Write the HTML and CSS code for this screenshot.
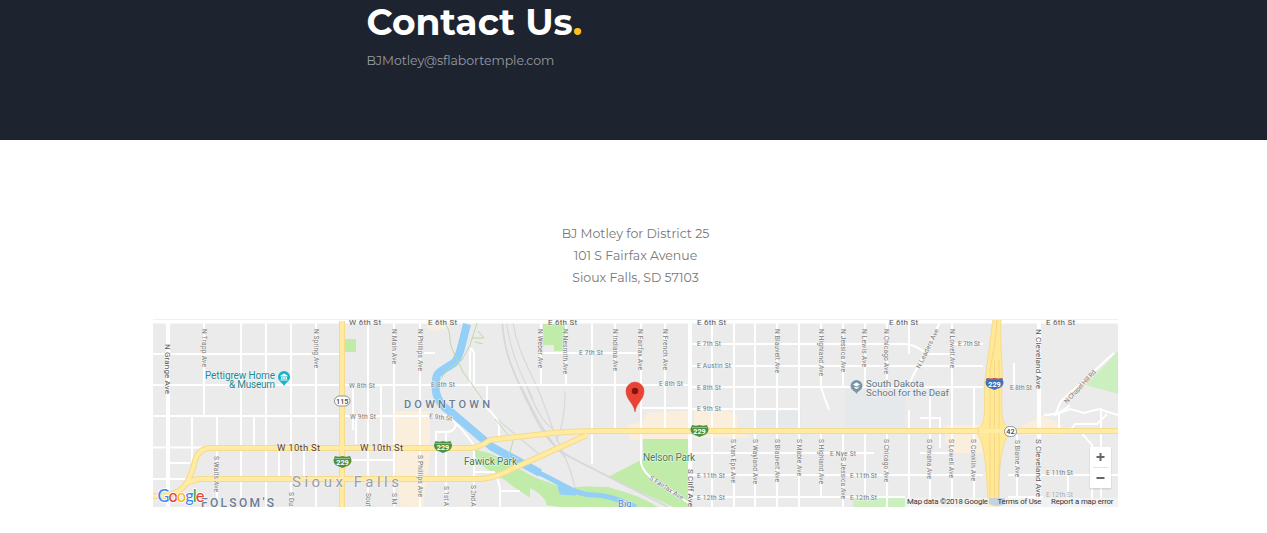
FILE: index.html
```html
<!DOCTYPE html>
<html lang="en">
<head>
<meta charset="utf-8">
<title>Contact Us</title>
<link rel="stylesheet" href="styles.css">
</head>
<body>
<header class="hero">
  <div class="hero-inner">
    <h1 class="title">Contact Us<span class="dot">.</span></h1>
    <p class="email">BJMotley@sflabortemple.com</p>
  </div>
</header>
<main class="content">
  <address class="address">
    <span>BJ Motley for District 25</span>
    <span>101 S Fairfax Avenue</span>
    <span>Sioux Falls, SD 57103</span>
  </address>
  <svg class="map" viewBox="153 319 965 188" role="img" aria-label="Map of Sioux Falls">
    <rect x="153" y="319" width="965" height="188" fill="#ebebeb"/>
    <!-- parks and built-up areas -->
    <g fill="#faefdc">
      <path d="M395 411h35v40h-35zM396 450h35l-8 57h-22l-6-40zM427 324h22v4l-14 3-8-3zM628 425l14-3 5-9 33-2h10v29h-60zM694 408h28l15 7v15l15 8h-58zM945 425h38v28h-28l-10-12zM1022 427l20-12 20 10v10h-40z"/>
    </g>
    <path d="M845 389h60v40h-60zM756 411h45v18h-45z" fill="#e6e9ec"/>
    <g fill="#c0eba9">
      <path d="M344 339h12v13h-12zM543 324h22v27h-11v-6h-11zM643 439h45v68h-15l-65-30 35-18z"/>
      <path d="M474 449c8 3 14 3 20 6l42 23 34 12c6-5 20-3 38-3 20 6 34 10 50 20h-98c-18-1-28-8-37-14-10-6-18-14-28-19-8-5-20-10-21-25z"/>
      <path d="M1118 351v43l-32-9zM853 498h52v9h-52z" fill="#ccefc0"/>
    </g>
    <path d="M530 488q11 5 16 14v5h-16z" fill="#ebebeb"/>
    <!-- railway -->
    <g fill="none" stroke="#d6d7d9" stroke-width="1.100">
      <path d="M502 319c2 32 8 46 24 80 13 27 22 46 44 58l98 50" stroke-width="1.800"/>
      <path d="M512 319c6 35 19 52 28 75l13 35c7 20 16 30 24 67M506 319c4 30 10 45 27 80M520 384c12 25 24 50 46 75M526 384c8 22 17 39 27 45M565 391c0 22-3 38-9 50M498 420l42 35"/>
    </g>
    <!-- local streets -->
    <g fill="none" stroke="#fff" stroke-width="2">
      <path d="M153 321.500h965" stroke-width="4"/>
      <path d="M153 354h189M153 385h537M153 416h292M153 447.500h50M170 463h20M153 479h40"/>
      <path d="M204 319v98M192 416v63M217 417v90M241 319v188M254 417v30M266 319v188M279 450v28M291 319v188M304 450v28M316 319v188M368 319v188M394 319v188M381 385v62M353 385v45M356 416v28M420 319v188M345 460h49M424 353h11"/>
      <path d="M436 477v-45h12q7-1 8-8M446 431v76M474 448v59M487 384v24q11 10 12 18v16M470 385v-28q0-14 4-4v32M474 472h20q6 10 6 20v15M500 491h20M445 415q14 8 30 32"/>
      <path d="M541 319v65M566 319v66M592 319v145M615 319v112M641 319v144q2 10 15 18l34 23M665 319v113M543 353h97M641 408h49"/>
      <path d="M692 344h213q10 0 22 10h25v-10h31M692 366h291M692 387h291M692 409h107M692 453h182M692 475h253M692 497h213M920 475h63M1008 475h110M1008 497h35"/>
      <path d="M712 319v188M734 319v188M755 319v188M777 319v188M799 319v188M821 319v68l4 12 4 11M821 431v66M843 319v68M843 431v76M865 319v68M865 431v66M887 319v68M887 431v76M909 319v35M909 410v97M930 387v120M952 319v188M974 387v120M940 322l-31 62M920 418h20v30M920 453h31M1014 363v24M1017 435v72"/>
      <path d="M1114 353l-53 48-6 14 15-6 14 4 15-4 19 6M1059 412v20h10l6-8h22l10-10M1080 431l12 14v62M1101 408v98M1068 475v32M1044 415q16 0 26-10"/>
      <path d="M168 319v188M690 319v188M1039 319v188" stroke-width="4"/>
    </g>
    <!-- river -->
    <g fill="none" stroke="#94cff8">
      <path d="M467 324l-6 24q-3 11-7 15c-16 10-18 10-18 18q-3 20 15 31l41 35 48 26" stroke-width="8"/>
      <path d="M535 471c27 12 39 24 59 24q16 0 42 12" stroke-width="5"/>
      <path d="M558 486q12-3 18 9l-16-1z" fill="#94cff8"/>
    </g>
    <path d="M446 325c6 8 2 16 7 26l10 21 20 28M477 323l-7 22-8 15-15 10-7 10M472 338h12l-6-7M483 344l-8-2M495 419l18 22-4 15" fill="none" stroke="#bbd9ae"/>
    <!-- arterial roads -->
    <g fill="none" stroke="#f6da8e" stroke-width="6">
      <path d="M342 321v186M153 496h12c22-5 24-16 29-31q3-17 17-17h260q10-1 19-8l45-5q31-4 65-4h518M187 483q8-4 15-4h278q15-1 32-10l75-34"/>
      <path d="M342 321v186M153 496h12c22-5 24-16 29-31q3-17 17-17h260q10-1 19-8l45-5q31-4 65-4h518M187 483q8-4 15-4h278q15-1 32-10l75-34" stroke="#ffeba1" stroke-width="3.800"/>
    </g>
    <path d="M993 319h8c-1 30 2 42 1 65-1 36 0 42 10 45v5c-11 1-13 35-14 73h-10c-1-29-3-65-10-72v-7c10-3 5-31 7-48z" fill="#ffe896" stroke="#f4d688" stroke-width=".8"/>
    <path d="M997 319q-1 23-7 50v138M999 360v147M994.500 360v147" fill="none" stroke="#efcb78" stroke-width=".6"/>
    <path d="M980 431h34" stroke="#ffeba1" stroke-width="4"/>
    <path d="M153 319.500h965" stroke="#f0f0f0"/>
    <!-- horizontal street names -->
    <g class="street">
      <g class="major">
        <text x="349" y="324.500" textLength="32">W 6th St</text><text x="428" y="324.500" textLength="29">E 6th St</text>
        <text x="548" y="324.500" textLength="29">E 6th St</text><text x="697" y="324.500" textLength="29">E 6th St</text>
        <text x="889" y="324.500" textLength="29">E 6th St</text><text x="1046" y="324.500" textLength="29">E 6th St</text>
      </g>
      <text x="349" y="388" textLength="26">W 8th St</text><text x="350" y="419" textLength="26">W 9th St</text>
      <text x="431" y="387" textLength="24">E 8th St</text><text x="429" y="418" textLength="23" transform="rotate(7 429 418)">E 9th St</text>
      <text x="579" y="355" textLength="24">E 7th St</text><text x="659" y="386" textLength="24">E 8th St</text>
      <text x="697" y="346" textLength="24">E 7th St</text><text x="697" y="368" textLength="34">E Austin St</text>
      <text x="697" y="390" textLength="24">E 8th St</text><text x="697" y="411" textLength="24">E 9th St</text>
      <text x="697" y="478" textLength="28">E 11th St</text><text x="697" y="500" textLength="28">E 12th St</text>
      <text x="830" y="456" textLength="26">E Nye St</text><text x="850" y="478" textLength="27">E 11th St</text>
      <text x="850" y="500" textLength="27">E 12th St</text><text x="958" y="346" textLength="22">E 7th St</text>
      <text x="1010" y="390" textLength="22">E 8th St</text><text x="1046" y="474.500" textLength="27">E 11th St</text>
      <text x="1046" y="497" textLength="27" opacity=".6">E 12th St</text>
    </g>
    <!-- vertical street names -->
    <g class="street">
      <g class="major">
        <text transform="translate(165 344) rotate(90)" textLength="50">N Grange Ave</text>
        <text transform="translate(1036 329) rotate(90)" textLength="60">N Cleveland Ave</text>
        <text transform="translate(1036 439) rotate(90)" textLength="58">S Cleveland Ave</text>
        <text transform="translate(688 469) rotate(90)" textLength="38">S Cliff Ave</text>
      </g>
      <text transform="translate(202 329) rotate(90)" textLength="38">N Trapp Ave</text>
      <text transform="translate(314 329) rotate(90)" textLength="39">N Spring Ave</text>
      <text transform="translate(392 329) rotate(90)" textLength="35">N Main Ave</text>
      <text transform="translate(418 329) rotate(90)" textLength="42">N Phillips Ave</text>
      <text transform="translate(538 329) rotate(90)" textLength="39">N Weber Ave</text>
      <text transform="translate(563 329) rotate(90)" textLength="45">N Nesmith Ave</text>
      <text transform="translate(613 329) rotate(90)" textLength="42">N Indiana Ave</text>
      <text transform="translate(638 329) rotate(90)" textLength="41">N Fairfax Ave</text>
      <text transform="translate(663 329) rotate(90)" textLength="41">N French Ave</text>
      <text transform="translate(775 329) rotate(90)" textLength="44">N Blauvelt Ave</text>
      <text transform="translate(819 329) rotate(90)" textLength="47">N Highland Ave</text>
      <text transform="translate(841 329) rotate(90)" textLength="43">N Jessica Ave</text>
      <text transform="translate(862 329) rotate(90)" textLength="38">N Lewis Ave</text>
      <text transform="translate(884 329) rotate(90)" textLength="45">N Chicago Ave</text>
      <text transform="translate(950 329) rotate(90)" textLength="39">N Lowell Ave</text>
      <text transform="translate(214 456) rotate(90)" textLength="36">S Walts Ave</text>
      <text transform="translate(289 492) rotate(90)" textLength="14">S Du</text>
      <text transform="translate(366 493) rotate(90)" textLength="13.500">Sout</text>
      <text transform="translate(392 493) rotate(90)" textLength="13">S M.</text>
      <text transform="translate(418 455) rotate(90)" textLength="42">S Phillips Ave</text>
      <text transform="translate(444 486) rotate(90)" textLength="20">S 1st A</text>
      <text transform="translate(471 485) rotate(90)" textLength="21.500">S 2nd A</text>
      <text transform="translate(731 439) rotate(90)" textLength="44">S Van Eps Ave</text>
      <text transform="translate(753 439) rotate(90)" textLength="45">S Wayland Ave</text>
      <text transform="translate(775 439) rotate(90)" textLength="43">S Blauvelt Ave</text>
      <text transform="translate(797 439) rotate(90)" textLength="37">S Mable Ave</text>
      <text transform="translate(819 439) rotate(90)" textLength="45">S Highland Ave</text>
      <text transform="translate(841 457) rotate(90)" textLength="42">S Jessica Ave</text>
      <text transform="translate(884 439) rotate(90)" textLength="43">S Chicago Ave</text>
      <text transform="translate(927 439) rotate(90)" textLength="40">S Omaha Ave</text>
      <text transform="translate(949 439) rotate(90)" textLength="39">S Lowell Ave</text>
      <text transform="translate(971 439) rotate(90)" textLength="42">S Conklin Ave</text>
      <text transform="translate(1015 440) rotate(90)" textLength="37">S Blaine Ave</text>
      <text transform="translate(920 369) rotate(-64)" textLength="43">N Leaders Ave</text>
      <text transform="translate(1067 404) rotate(-47)" textLength="43">N Chapel Hill Rd</text>
      <text transform="translate(649 479) rotate(33)" textLength="39">S Fairfax Ave</text>
    </g>
    <g class="place">
      <text x="277" y="451" textLength="43" fill="#593a21" font-size="9.500">W 10th St</text><text x="360" y="451" textLength="43" fill="#593a21" font-size="9.500">W 10th St</text>
      <text x="404" y="408" textLength="86" fill="#6b7c93" font-size="11" font-weight="500">DOWNTOWN</text>
      <text x="292" y="487" textLength="107" fill="#9a9da4" font-size="15">Sioux Falls</text>
      <text x="201" y="506.500" textLength="73" fill="#6b7c93" font-size="12" font-weight="500">FOLSOM'S</text>
      <g fill="#228990" font-size="10"><text x="205" y="378.500" textLength="70">Pettigrew Home</text><text x="229" y="388" textLength="46">&amp; Museum</text></g>
      <g fill="#607683" font-size="9.900"><text x="866" y="387" textLength="58">South Dakota</text><text x="866" y="396.300" textLength="83">School for the Deaf</text></g>
      <g fill="#368448" font-size="10"><text x="464" y="465" textLength="53">Fawick Park</text><text x="643" y="461" textLength="52">Nelson Park</text></g>
      <text x="618" y="506.500" fill="#4b86c9" font-size="9.500">Big</text>
    </g>
    <!-- pins -->
    <path d="M284 386c-1-3-6-5-6-9a6 6 0 0 1 12 0c0 4-5 6-6 9z" fill="#12b5cb"/>
    <path d="M280.500 375.500l3.500-2 3.500 2v1h-7zM281 377h1.500v2H281zm2.250 0h1.500v2h-1.500zm2.250 0H287v2h-1.500zM280.500 379.500h7v1h-7z" fill="#fff"/>
    <path d="M856.500 394c-1-3-6-4-6-8a6 6 0 0 1 12 0c0 4-5 5-6 8z" fill="#7896a5"/>
    <path d="M853 384.500l3.500-2 3.500 2-3.500 2zM854.500 386.500l2 1 2-1v1.500l-2 1-2-1z" fill="#fff"/>
    <path d="M635 412c-1-9-9-12-9-21a9 9 0 0 1 18 0c0 9-8 12-9 21z" fill="#ea4335" stroke="#d73a30" stroke-width=".5"/>
    <circle cx="635" cy="391" r="3.200" fill="#811411"/>
    <!-- route shields -->
    <defs><path id="shield" d="M-7.500-6q4 1.500 7.500 0 3.500 1.500 7.500 0l1.500 4c0 5-4 6-9 8-5-2-9-3-9-8z"/></defs>
    <g class="shield-text" fill="#4d9144">
      <use href="#shield" x="342.500" y="462"/><use href="#shield" x="443" y="447"/><use href="#shield" x="699.500" y="431"/><use href="#shield" x="994.500" y="384" fill="#3f72bd"/>
      <path d="M987 378q4 1.500 7.500 0 3.500 1.500 7.500 0l1 2h-17z" fill="#d44c47"/>
      <path d="M335 458.500h15M435.500 443.500h15M692 427.500h15" stroke="#d5e6cf" stroke-width=".5"/>
      <g fill="#fff"><text x="342.500" y="465.300">229</text><text x="443" y="450.300">229</text><text x="699.500" y="434.300">229</text><text x="994.500" y="387.300">229</text></g>
    </g>
    <g fill="#fff" stroke="#888" stroke-width=".9"><rect x="334.500" y="396" width="15.500" height="10" rx="5"/><rect x="1004.500" y="426.500" width="12" height="10" rx="5"/></g>
    <g class="shield-text numbers" fill="#444"><text x="342.300" y="404">115</text><text x="1010.500" y="434.300">42</text></g>
    <!-- map furniture -->
    <rect x="905" y="498" width="213" height="9" fill="#f5f5f5" opacity=".7"/>
    <path d="M989 498h16v6q-8 4-16 0z" fill="#b9ccdf" opacity=".8"/>
    <text class="google" x="157.500" y="501.500" textLength="47"><tspan fill="#4285f4">G</tspan><tspan fill="#ea4335">o</tspan><tspan fill="#fbbc05">o</tspan><tspan fill="#4285f4">g</tspan><tspan fill="#34a853">l</tspan><tspan fill="#ea4335">e</tspan></text>
    <g class="credits"><text x="907" y="504" textLength="81">Map data ©2018 Google</text><text x="997.500" y="504" textLength="44">Terms of Use</text><text x="1051" y="504" textLength="62.500">Report a map error</text></g>
    <rect x="1089.500" y="447.500" width="22" height="42" rx="1" fill="#aaa" opacity=".35"/>
    <rect x="1090" y="447" width="21" height="41" rx="1" fill="#fff"/>
    <path d="M1093 467.500h15" stroke="#e3e3e3"/>
    <path d="M1096.500 457h8M1100.500 453v8M1096.500 478h8" stroke="#666" stroke-width="2"/>
  </svg>
</main>
</body>
</html>
```
FILE: styles.css
```css
body { margin: 0; background: #fff; font-family: Montserrat, Inter, sans-serif; overflow: hidden; }
.hero { height: 140px; background: #1e242f; }
.hero-inner { padding-left: 366.5px; }
.title { margin: 0; height: 49px; font-size: 36px; line-height: 44px; font-weight: 700; color: #fff; white-space: nowrap; }
.dot { color: #fdc21c; }
.email { margin: 0; font-size: 12.5px; line-height: 24px; letter-spacing: -.05px; color: #999b9f; }
.content { display: flex; flex-direction: column; align-items: center; padding-top: 83px; }
.address { display: flex; flex-direction: column; align-items: center; height: 96px; margin-left: 4px; font-size: 12.5px; line-height: 22px; font-style: normal; color: #777; }
.map { display: block; width: 965px; height: 188px; margin-left: 4px; font-family: Roboto, sans-serif; }
.street { font-size: 6.6px; fill: #7b7b7b; paint-order: stroke; stroke: #f3f3f3; stroke-width: 1px; }
.major { font-size: 8px; fill: #5c5c5c; }
.place { paint-order: stroke; stroke: #f6f6f6; stroke-width: 1px; }
.shield-text { font-size: 7.3px; font-weight: 700; text-anchor: middle; }
.numbers { font-weight: 500; }
.google { font-family: Lato, sans-serif; font-size: 16.5px; font-weight: 500; paint-order: stroke; stroke: #fff; stroke-width: 1.5px; }
.credits { font-family: Roboto, sans-serif; font-size: 7.8px; fill: #333; }
```
